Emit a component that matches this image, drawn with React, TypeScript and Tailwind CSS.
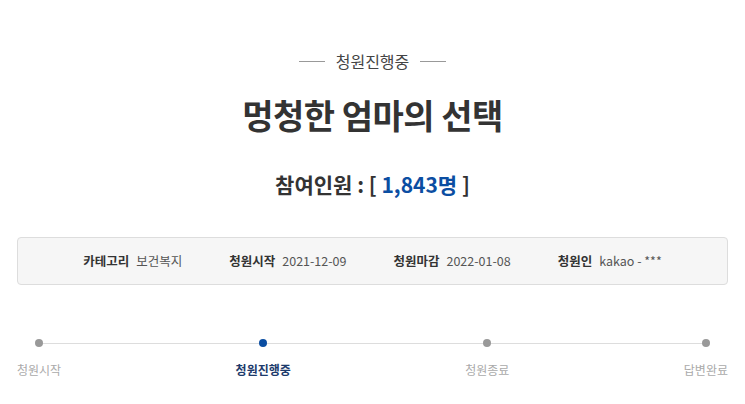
const FONT = { fontFamily: '"Noto Sans CJK KR", "Noto Sans", sans-serif' };

const steps = [
  { label: '청원시작', active: false },
  { label: '청원진행중', active: true },
  { label: '청원종료', active: false },
  { label: '답변완료', active: false },
];

const info = [
  { label: '카테고리', value: '보건복지' },
  { label: '청원시작', value: '2021-12-09' },
  { label: '청원마감', value: '2022-01-08' },
  { label: '청원인', value: 'kakao - ***' },
];

export default function App() {
  return (
    <div className="h-[404px] w-[745px] overflow-hidden bg-white text-[#333]" style={FONT}>
      <div className="flex flex-col items-center pt-[49px]">
        {/* status tag */}
        <div className="flex items-center gap-[11px]">
          <span className="h-px w-[26px] bg-[#999]" />
          <span className="text-[16px] leading-6 text-[#444]">청원진행중</span>
          <span className="h-px w-[26px] bg-[#999]" />
        </div>

        <h1 className="mt-[20px] text-[34px] font-bold leading-[44px] tracking-[-0.5px] text-[#333]">
          멍청한 엄마의 선택
        </h1>

        <h2 className="mt-[33px] text-[21px] font-bold leading-7 text-[#333]">
          참여인원 : [ <span className="text-[#0b4ea2]">1,843명</span> ]
        </h2>
      </div>

      <div className="mx-[17px] mt-[39px] flex h-[48px] items-center justify-center gap-[47px] rounded border border-[#ddd] bg-[#f6f6f6] text-[12.5px]">
        {info.map(item => (
          <div key={item.label} className="flex items-center gap-[7px]">
            <span className="font-bold text-[#333]">{item.label}</span>
            <span className="text-[#555]">{item.value}</span>
          </div>
        ))}
      </div>

      <div className="relative mx-[17px] mt-[54px]">
        <div className="absolute left-[23px] right-[23px] top-[4px] h-px bg-[#ddd]" />
        <div className="relative flex justify-between">
          {steps.map(step => (
            <div key={step.label} className="flex flex-col items-center">
              <span className={`h-[8px] w-[8px] rounded-full ${step.active ? 'bg-[#0b4ea2]' : 'bg-[#999]'}`} />
              <span
                className={`mt-[15px] text-[12px] leading-4 ${step.active ? 'font-bold text-[#1c3a6b]' : 'text-[#aaa]'}`}
              >
                {step.label}
              </span>
            </div>
          ))}
        </div>
      </div>
    </div>
  );
}
